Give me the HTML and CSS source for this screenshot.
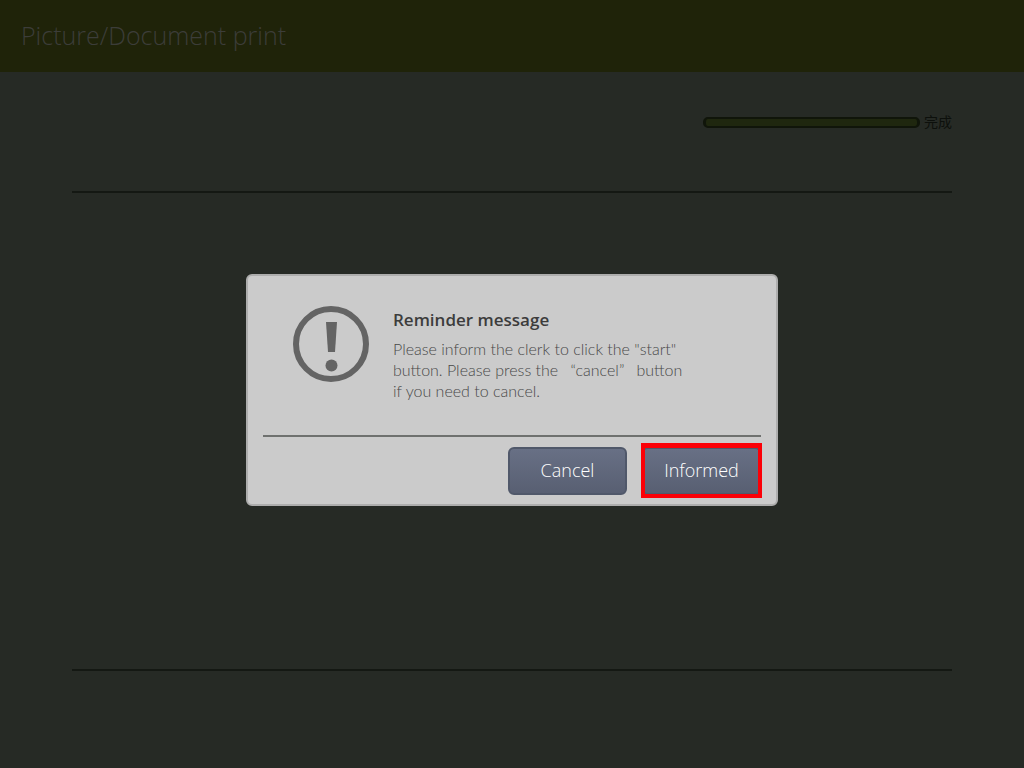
FILE: index.html
```
<!DOCTYPE html>
<html lang="en">

<head>
    <meta charset="UTF-8">
    <meta name="viewport" content="width=device-width, initial-scale=1.0">
    <title>Picture/Document print</title>
    <link rel="stylesheet" href="styles.css">
</head>

<body>

    <header class="top">
        <h1>Picture/Document print</h1>
    </header>

    <main class="page">
        <div class="status">
            <div class="bar"></div>
            <span lang="zh-Hant">完成</span>
        </div>
        <div class="content"></div>
    </main>

    <div class="overlay">
        <div class="modal" role="dialog" aria-labelledby="modal-title">
            <div class="message">
                <svg class="icon" viewBox="0 0 76 76" aria-hidden="true">
                    <circle cx="38" cy="38" r="35" fill="none" stroke="#646464" stroke-width="6" />
                    <path d="M33 16h11l-2 30h-7z" fill="#646464" />
                    <circle cx="38.500" cy="59.500" r="6" fill="#646464" />
                </svg>
                <div class="text">
                    <h2 id="modal-title">Reminder message</h2>
                    <p>Please inform the clerk to click the "start"<br>
                        button. Please press the &ensp;“cancel” &ensp;button<br>
                        if you need to cancel.</p>
                </div>
            </div>
            <div class="buttons">
                <button type="button">Cancel</button>
                <button type="button" class="marked">Informed</button>
            </div>
        </div>
    </div>

</body>

</html>
```

FILE: styles.css
```
* {
    box-sizing: border-box;
}

body {
    margin: 0;
    min-height: 100vh;
    display: flex;
    flex-direction: column;
    background-color: #262a25;
    font-family: "Open Sans", "Noto Sans", "Noto Sans CJK TC", sans-serif;
}

.top {
    height: 72px;
    padding: 0 21px 2px;
    display: flex;
    align-items: center;
    background-color: #1f2309;
}

.top h1 {
    margin: 0;
    font-size: 25px;
    font-weight: 300;
    color: #3c3d39;
}

.page {
    flex: 1;
    display: flex;
    flex-direction: column;
    padding: 0 72px 97px;
}

.status {
    height: 119px;
    padding-bottom: 18px;
    display: flex;
    align-items: center;
    justify-content: flex-end;
    gap: 4px;
    font-size: 14px;
    color: #0d100c;
}

.status span {
    padding-bottom: 3px;
}

.bar {
    width: 217px;
    height: 11px;
    border: 2px solid #10150a;
    border-width: 2px 3px;
    border-radius: 5px;
    background-color: #1f270f;
}

.content {
    flex: 1;
    border-top: 2px solid #141813;
    border-bottom: 2px solid #141813;
}

.overlay {
    position: fixed;
    inset: 0;
    padding-top: 12px;
    display: flex;
    align-items: center;
    justify-content: center;
}

.modal {
    width: 532px;
    border: 2px solid #adadad;
    border-radius: 6px;
    background-color: #cbcbcb;
}

.message {
    min-height: 159px;
    padding: 30px 45px 0;
    display: flex;
    gap: 24px;
}

.icon {
    flex: none;
    width: 76px;
    height: 76px;
}

.text h2 {
    margin: 2px 0 6px;
    font-size: 17px;
    font-weight: 600;
    line-height: 24px;
    color: #3c3c3c;
}

.text p {
    margin: 0;
    font-family: Lato, sans-serif;
    font-size: 16px;
    font-weight: 300;
    line-height: 21px;
    color: #484848;
    white-space: nowrap;
}

.buttons {
    margin: 0 15px;
    padding: 10px 0 9px;
    display: flex;
    justify-content: flex-end;
    gap: 15px;
    border-top: 2px solid #6f716f;
}

.buttons button {
    width: 119px;
    height: 48px;
    padding: 0 0 2px;
    border: 2px solid #50586a;
    border-radius: 6px;
    background: linear-gradient(#687085, #585f72);
    font-family: inherit;
    font-size: 18px;
    font-weight: 300;
    color: #fff;
}

.buttons .marked {
    position: relative;
}

.marked::after {
    content: '';
    position: absolute;
    inset: -6px -3px -5px;
    border: 4px solid #fb0007;
    border-top-width: 5px;
}
```
